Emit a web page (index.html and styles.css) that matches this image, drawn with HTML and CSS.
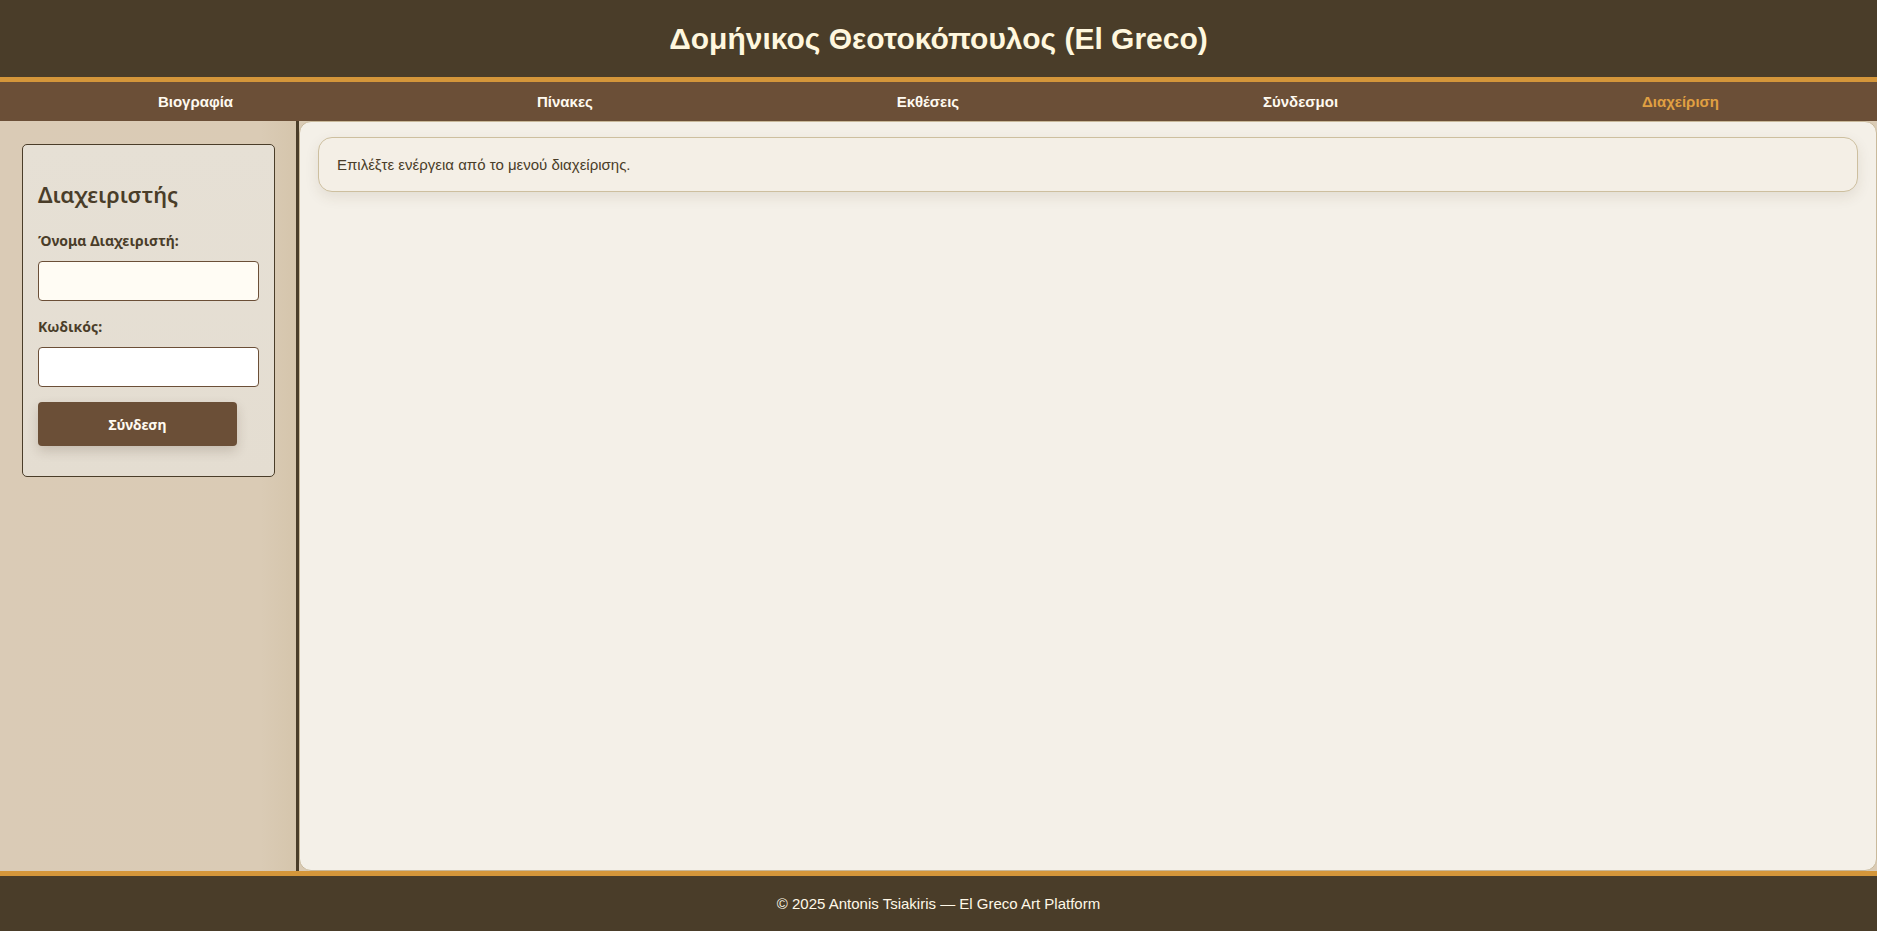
FILE: index.html
```html
<!DOCTYPE html>
<html lang="el">
<head>
<meta charset="utf-8">
<title>El Greco</title>
<link rel="stylesheet" href="styles.css">
</head>
<body>
<div class="page">
  <header class="site-header">
    <h1 class="site-title">Δομήνικος Θεοτοκόπουλος (El Greco)</h1>
  </header>
  <nav class="site-nav">
    <a class="nav-link" href="#">Βιογραφία</a>
    <a class="nav-link" href="#">Πίνακες</a>
    <a class="nav-link" href="#">Εκθέσεις</a>
    <a class="nav-link" href="#">Σύνδεσμοι</a>
    <a class="nav-link active" href="#">Διαχείριση</a>
  </nav>
  <div class="layout">
    <aside class="sidebar">
      <form class="login-card">
        <h2 class="login-title">Διαχειριστής</h2>
        <label class="field-label" for="u">Όνομα Διαχειριστή:</label>
        <input class="field-input ivory" id="u" type="text">
        <label class="field-label" for="p">Κωδικός:</label>
        <input class="field-input last" id="p" type="password">
        <button class="login-btn" type="button">Σύνδεση</button>
      </form>
    </aside>
    <main class="main">
      <div class="notice">Επιλέξτε ενέργεια από το μενού διαχείρισης.</div>
    </main>
  </div>
  <footer class="site-footer">© 2025 Antonis Tsiakiris — El Greco Art Platform</footer>
</div>
</body>
</html>
```
FILE: styles.css
```css
* { box-sizing: border-box; }
html, body { margin: 0; padding: 0; height: 100%; }
body {
  font-family: "Liberation Sans", Arial, sans-serif;
  background: #4a3d29;
}
.page {
  display: flex;
  flex-direction: column;
  height: 100vh;
}
.site-header {
  height: 82px;
  flex: 0 0 82px;
  background: #4a3d29;
  border-bottom: 5px solid #d4963a;
  display: flex;
  align-items: center;
  justify-content: center;
}
.site-title {
  margin: 0;
  color: #fff7de;
  font-size: 30px;
  font-weight: bold;
  line-height: 36px;
}
.site-nav {
  flex: 0 0 39px;
  height: 39px;
  padding: 0 6px;
  background: #6b4f37;
  display: flex;
  justify-content: space-around;
  align-items: center;
}
.nav-link {
  color: #fffaf0;
  text-decoration: none;
  font-weight: bold;
  font-size: 15px;
}
.nav-link.active { color: #e0a042; }
.layout {
  flex: 1 1 auto;
  display: flex;
  min-height: 0;
  background: #dacbb5;
}
.sidebar {
  flex: 0 0 299px;
  width: 299px;
  padding: 23px 21px 0 22px;
  background: linear-gradient(to right, #dacbb6 0%, #dacbb5 88%, #d5c5ac 100%);
  border-right: 3px solid #4a3d29;
  font-family: "Noto Sans", "Open Sans", sans-serif;
}
.login-card {
  background: linear-gradient(#e6e0d5, #e4ddd1);
  border: 1px solid #4a3d29;
  border-radius: 5px;
  padding: 15px;
}
.login-title {
  margin: 19px 0 22px;
  font-size: 22px;
  line-height: 30px;
  font-weight: 600;
  color: #4a3d29;
}
.field-label {
  display: block;
  font-size: 14px;
  line-height: 19px;
  font-weight: bold;
  color: #4a3d29;
  margin-bottom: 11px;
}
.field-input {
  display: block;
  width: 100%;
  height: 40px;
  margin: 0 0 16px;
  border: 1px solid #6b4f37;
  border-radius: 4px;
  background: #ffffff;
}
.field-input.ivory { background: #fffcf4; }
.field-input.last { margin-bottom: 15px; }
.login-btn {
  display: block;
  width: 90%;
  height: 44px;
  margin: 0 0 15px;
  border: 0;
  border-radius: 4px;
  background: #6b4f37;
  color: #fffaf0;
  font-family: "Noto Sans", "Open Sans", sans-serif;
  font-weight: bold;
  font-size: 14px;
  box-shadow: 0 5px 12px rgba(60, 40, 20, 0.18);
}
.main {
  flex: 1 1 auto;
  background: #f4f0e8;
  border: 1px solid #c9b99b;
  border-radius: 12px;
  padding: 15px 18px;
}
.notice {
  height: 55px;
  display: flex;
  align-items: center;
  padding: 0 18px;
  border: 1px solid #cdbf9f;
  border-radius: 14px;
  background: #f4efe6;
  color: #4a3d29;
  font-size: 15px;
  box-shadow: 0 5px 14px rgba(80, 60, 30, 0.10);
}
.site-footer {
  flex: 0 0 60px;
  height: 60px;
  border-top: 5px solid #d4963a;
  background: #4a3d29;
  color: #fff8e7;
  font-size: 15px;
  display: flex;
  align-items: center;
  justify-content: center;
}
```
